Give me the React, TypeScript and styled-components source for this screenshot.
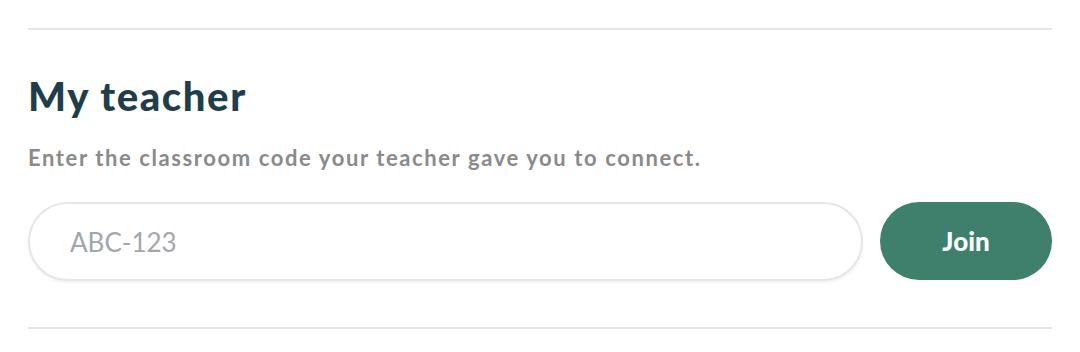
import React from "react";
import styled, { createGlobalStyle } from "styled-components";

const Global = createGlobalStyle`
  html, body { margin: 0; padding: 0; background: #ffffff; }
  body { font-family: Lato, "Open Sans", sans-serif; }
  * { box-sizing: border-box; }
`;

const Section = styled.section`
  padding: 28px 28px 0 28px;
`;

const Divider = styled.hr`
  margin: 0;
  border: none;
  height: 2px;
  background: #e6e6e6;
`;

const Body = styled.div`
  padding: 42px 0 46px 0;
`;

const Title = styled.h2`
  margin: 0;
  font-family: Lato, sans-serif;
  font-weight: 900;
  font-size: 40px;
  line-height: 48px;
  letter-spacing: 1.6px;
  color: #1f3d4a;
`;

const Subtitle = styled.p`
  margin: 24px 0 0 0;
  font-size: 22px;
  line-height: 28px;
  font-weight: 700;
  color: #8a8a8a;
  letter-spacing: 1.6px;
`;

const Row = styled.div`
  margin-top: 30px;
  display: flex;
  gap: 17px;
  align-items: stretch;
`;

const Input = styled.input`
  flex: 1;
  height: 79px;
  border: 2px solid #e6e6e6;
  border-radius: 40px;
  padding: 0 40px;
  font-family: Lato, sans-serif;
  font-size: 26px;
  color: #333;
  outline: none;
  box-shadow: 0 2px 3px rgba(0, 0, 0, 0.05);
  &::placeholder { color: #a3a6ad; }
`;

const Button = styled.button`
  width: 172px;
  height: 78px;
  border: none;
  border-radius: 39px;
  background: #3e806c;
  color: #ffffff;
  font-family: Lato, sans-serif;
  font-weight: 900;
  font-size: 26px;
  cursor: pointer;
`;

export default function App() {
  return (
    <>
      <Global />
      <Section>
        <Divider />
        <Body>
          <Title>My teacher</Title>
          <Subtitle>Enter the classroom code your teacher gave you to connect.</Subtitle>
          <Row>
            <Input placeholder="ABC-123" />
            <Button>Join</Button>
          </Row>
        </Body>
        <Divider />
      </Section>
    </>
  );
}
